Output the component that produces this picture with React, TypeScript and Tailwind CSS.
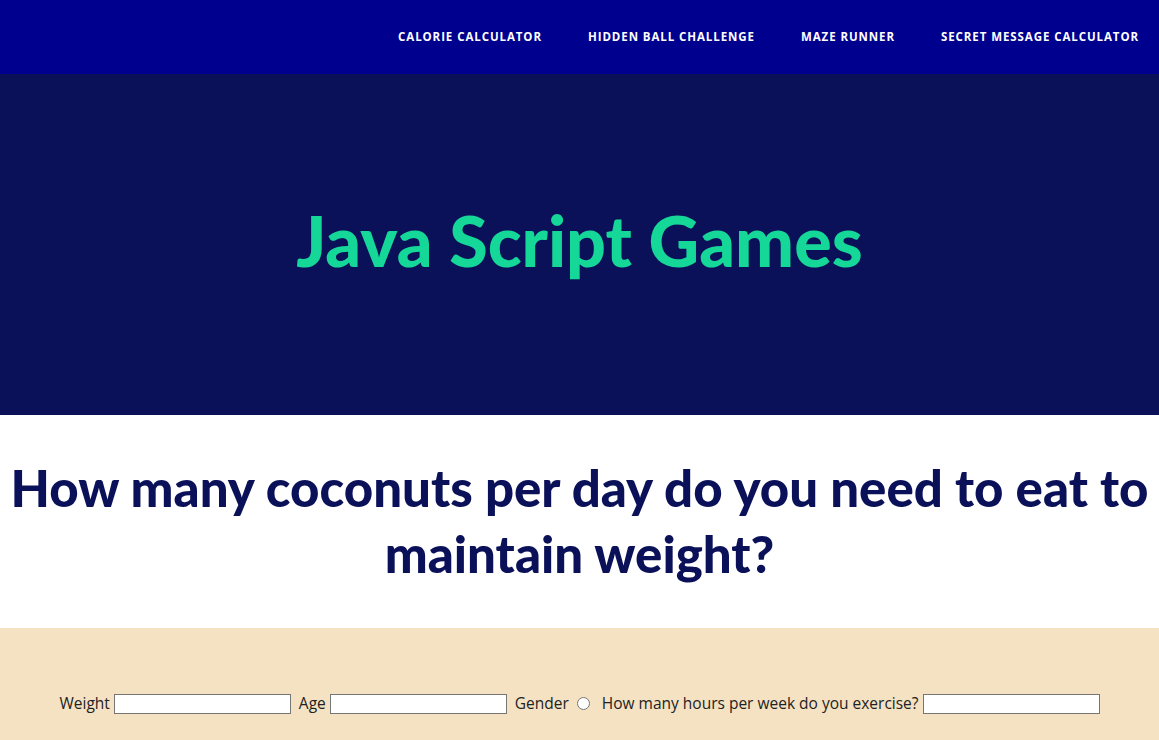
export default function App() {
  const links = [
    "Calorie Calculator",
    "Hidden Ball Challenge",
    "Maze Runner",
    "Secret Message Calculator",
  ];

  return (
    <div className="min-h-screen bg-[#f4e2c3]">
      {/* top nav */}
      <nav className="flex h-[74px] items-center justify-end gap-[46px] bg-[#00008f] pr-5">
        {links.map((l) => (
          <a
            key={l}
            href="#"
            className="-mt-px text-[11.5px] font-bold uppercase tracking-[0.08em] text-white [font-family:'Open_Sans',sans-serif]"
          >
            {l}
          </a>
        ))}
      </nav>

      {/* hero */}
      <header className="flex h-[341px] items-center justify-center bg-[#0b1159]">
        <h1 className="-mt-2 text-[70px] font-black text-[#15d798] [font-family:Lato,sans-serif]">
          Java Script Games
        </h1>
      </header>

      {/* question */}
      <section className="bg-white px-2 pt-10 pb-[41px] text-center">
        <h2 className="text-[51px] font-black leading-[66px] text-[#0b1159] [font-family:Lato,sans-serif]">
          How many coconuts per day do you need to eat to maintain weight?
        </h2>
      </section>

      {/* form */}
      <section className="pt-16 pb-8 text-center text-[15.5px] text-[#222] [font-family:'Open_Sans',sans-serif]">
        <form className="flex items-center justify-center">
          <label className="mr-1">Weight</label>
          <input className="h-[20px] w-[177px] border border-[#767676] bg-white" />
          <label className="ml-2 mr-1">Age</label>
          <input className="h-[20px] w-[177px] border border-[#767676] bg-white" />
          <label className="ml-2">Gender</label>
          <input type="radio" className="mx-2 h-[13px] w-[13px]" />
          <label className="ml-1 mr-1">How many hours per week do you exercise?</label>
          <input className="h-[20px] w-[177px] border border-[#767676] bg-white" />
        </form>
      </section>
    </div>
  );
}
